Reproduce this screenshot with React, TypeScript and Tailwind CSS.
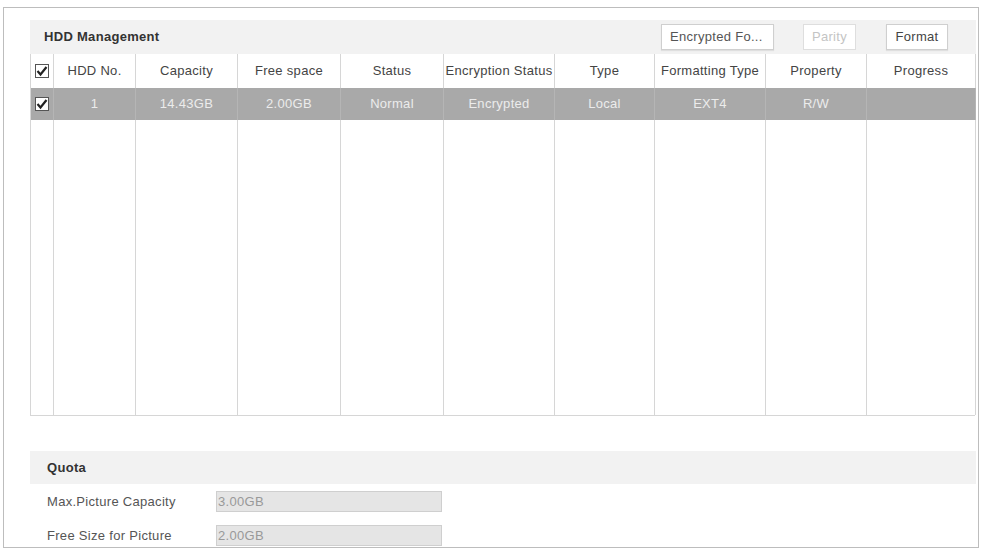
import React from 'react';

const cols = [
  { label: '', w: 'w-[23px]' },
  { label: 'HDD No.', w: 'w-[82px]' },
  { label: 'Capacity', w: 'w-[102px]' },
  { label: 'Free space', w: 'w-[103px]' },
  { label: 'Status', w: 'w-[103px]' },
  { label: 'Encryption Status', w: 'w-[111px]' },
  { label: 'Type', w: 'w-[100px]' },
  { label: 'Formatting Type', w: 'w-[111px]' },
  { label: 'Property', w: 'w-[101px]' },
  { label: 'Progress', w: 'w-[109px]' },
];

const row = ['', '1', '14.43GB', '2.00GB', 'Normal', 'Encrypted', 'Local', 'EXT4', 'R/W', ''];

function Check() {
  return (
    <svg width="14" height="14" viewBox="0 0 14 14" className="shrink-0">
      <rect x="0.5" y="0.5" width="13" height="13" fill="#fff" stroke="#555" />
      <path d="M2.5 7 L5.5 10.5 L11.5 3" fill="none" stroke="#222" strokeWidth="2.2" />
    </svg>
  );
}

export default function App() {
  return (
    <div className="w-[981px] h-[551px] bg-white pl-[3px] pt-[7px] font-['Liberation_Sans',Arial,sans-serif] text-[13px] tracking-[0.3px] text-[#444]">
      <div className="w-[976px] h-[541px] overflow-hidden border border-[#bdbdbd] pl-[26px] pr-[2px] pt-[12px]">
        {/* HDD Management header */}
        <div className="h-[34px] bg-[#f2f2f2] flex items-center pl-[14px] pr-[28px]">
          <div className="font-bold text-[#333] flex-1">HDD Management</div>
          <button className="w-[113px] h-[26px] border border-[#cfcfcf] bg-white text-left pl-[8px] text-[#555] shadow-[0_1px_1px_rgba(0,0,0,0.08)]">
            Encrypted Fo...
          </button>
          <button className="ml-[29px] w-[53px] h-[26px] border border-[#dedede] bg-white text-[#c4c4c4]">
            Parity
          </button>
          <button className="ml-[30px] w-[62px] h-[26px] border border-[#cfcfcf] bg-white text-[#444] shadow-[0_1px_1px_rgba(0,0,0,0.08)]">
            Format
          </button>
        </div>

        {/* table */}
        <div className="w-[945px] border-l border-[#d6d6d6] border-b">
          <div className="flex h-[34px] bg-white">
            {cols.map((c, i) => (
              <div key={i} className={`${c.w} shrink-0 flex items-center justify-center border-r border-[#d6d6d6] text-[#444] whitespace-nowrap`}>
                {i === 0 ? <Check /> : c.label}
              </div>
            ))}
          </div>
          <div className="flex h-[32px] bg-[#a9a9a9]">
            {cols.map((c, i) => (
              <div key={i} className={`${c.w} shrink-0 flex items-center justify-center border-r border-[#b5b5b5] text-[#ececec]`}>
                {i === 0 ? <Check /> : row[i]}
              </div>
            ))}
          </div>
          <div className="flex h-[295px]">
            {cols.map((c, i) => (
              <div key={i} className={`${c.w} shrink-0 border-r border-[#d6d6d6]`} />
            ))}
          </div>
        </div>

        {/* Quota */}
        <div className="mt-[35px] h-[33px] bg-[#f2f2f2] flex items-center pl-[17px] font-bold text-[#333]">
          Quota
        </div>
        <div className="flex items-center h-[21px] mt-[7px] pl-[17px]">
          <div className="w-[169px] text-[#555]">Max.Picture Capacity</div>
          <div className="w-[226px] h-[21px] bg-[#e5e5e5] border border-[#cfcfcf] flex items-center pl-[1px] text-[#999]">3.00GB</div>
        </div>
        <div className="flex items-center h-[21px] mt-[13px] pl-[17px]">
          <div className="w-[169px] text-[#555]">Free Size for Picture</div>
          <div className="w-[226px] h-[21px] bg-[#e5e5e5] border border-[#cfcfcf] flex items-center pl-[1px] text-[#999]">2.00GB</div>
        </div>
      </div>
    </div>
  );
}
